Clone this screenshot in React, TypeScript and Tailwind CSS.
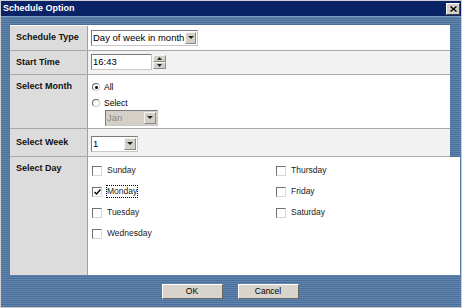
import React from "react";

function ArrowButton() {
  return (
    <span className="m-[1px] flex w-[12px] items-center justify-center border border-t-[#f4f4f4] border-l-[#f4f4f4] border-b-[#8a8a8a] border-r-[#8a8a8a] bg-[#d4d0c8]">
      <svg width="6" height="3" viewBox="0 0 6 3">
        <path d="M0 0h6L3 3z" fill="#222" />
      </svg>
    </span>
  );
}

function Dropdown({ text, width, disabled }: { text: string; width: string; disabled?: boolean }) {
  return (
    <div
      className={`flex h-[16px] ${width} items-stretch border border-t-[#7a7a7a] border-l-[#7a7a7a] border-b-[#c8c8c8] border-r-[#c8c8c8] ${
        disabled ? "bg-[#d4d0c8] text-[#8a8a8a]" : "bg-white text-black"
      }`}
    >
      <span className="flex-1 pl-[1px] text-[9.5px] leading-[14px] whitespace-nowrap">{text}</span>
      <ArrowButton />
    </div>
  );
}

function Radio({ checked, label }: { checked?: boolean; label: string }) {
  return (
    <div className="flex items-center gap-[4px]">
      <span className="flex h-[8px] w-[8px] items-center justify-center rounded-full border border-t-[#666] border-l-[#666] border-b-[#ccc] border-r-[#ccc] bg-white">
        {checked && <span className="h-[3px] w-[3px] rounded-full bg-black" />}
      </span>
      <span className="text-[8.5px]">{label}</span>
    </div>
  );
}

function Check({ label, checked, focused }: { label: string; checked?: boolean; focused?: boolean }) {
  return (
    <div className="flex h-[21px] items-center gap-[4px]">
      <span className="flex h-[10px] w-[10px] items-center justify-center border border-t-[#707070] border-l-[#707070] border-b-[#d8d8d8] border-r-[#d8d8d8] bg-white">
        {checked && (
          <svg width="7" height="6" viewBox="0 0 7 6">
            <path d="M0.5 3l2 2 4-4.5" stroke="#000" strokeWidth="1.3" fill="none" />
          </svg>
        )}
      </span>
      <span className={`text-[8.5px] leading-[11px] text-[#222] ${focused ? "border border-dotted border-black" : "border border-transparent"}`}>
        {label}
      </span>
    </div>
  );
}

function Row({
  label,
  h,
  bg,
  top,
  last,
  children,
}: {
  label: string;
  h: string;
  bg: string;
  top?: boolean;
  last?: boolean;
  children: React.ReactNode;
}) {
  return (
    <div className={`flex ${h} ${last ? "" : "border-b border-[#a8a8a8]"}`}>
      <div
        className={`flex w-[78px] shrink-0 border-r border-[#a0a0a0] bg-[#dcdcdc] pl-[6px] text-[9px] font-bold text-[#111] ${
          top ? "items-start pt-[5px]" : "items-center"
        }`}
      >
        {label}
      </div>
      <div className={`flex-1 ${bg}`}>{children}</div>
    </div>
  );
}

export default function App() {
  const btn =
    "flex h-[15px] w-[61px] items-center justify-center border border-t-white border-l-white border-b-[#666] border-r-[#666] bg-[#d8d4cc] text-[8.5px]";
  return (
    <div className="flex h-[308px] w-[462px] flex-col border border-[#cfcfcf] bg-[repeating-linear-gradient(180deg,#6086b0_0px,#6086b0_1px,#4c6f9a_1px,#4c6f9a_2px)] font-['Liberation_Sans',Arial,sans-serif] text-black">
      <div className="flex h-[16px] shrink-0 items-center justify-between border-b border-[#7f9dc2] bg-[#0a2266] pl-[2px] pr-[1px]">
        <span className="text-[9px] font-bold text-white">Schedule Option</span>
        <span className="flex h-[12px] w-[14px] items-center justify-center border border-t-white border-l-white border-b-[#404040] border-r-[#404040] bg-[#d4d0c8]">
          <svg width="7" height="6" viewBox="0 0 7 6">
            <path d="M0.5 0.5l6 5M6.5 0.5l-6 5" stroke="#000" strokeWidth="1.4" />
          </svg>
        </span>
      </div>

      <div className="flex flex-1 flex-col pl-[9px] pr-[11px] pt-[8px]">
        <div className="flex h-[250px] flex-col border-t border-white bg-white">
          <Row label="Schedule Type" h="h-[25px]" bg="bg-white">
            <div className="flex h-full items-center pl-[3px]">
              <Dropdown text="Day of week in month" width="w-[107px]" />
            </div>
          </Row>
          <Row label="Start Time" h="h-[24px]" bg="bg-[#f2f2f2]">
            <div className="flex h-full items-center pl-[3px]">
              <div className="flex h-[16px] w-[61px] items-center border border-t-[#7a7a7a] border-l-[#7a7a7a] border-b-[#c8c8c8] border-r-[#c8c8c8] bg-white pl-[1px] text-[9.5px]">
                16:43
              </div>
              <div className="ml-[1px] flex h-[14px] w-[13px] flex-col">
                <span className="flex flex-1 items-center justify-center border border-t-[#f4f4f4] border-l-[#f4f4f4] border-b-[#8a8a8a] border-r-[#8a8a8a] bg-[#d4d0c8]">
                  <svg width="5" height="3" viewBox="0 0 5 3">
                    <path d="M0 3h5L2.5 0z" fill="#222" />
                  </svg>
                </span>
                <span className="flex flex-1 items-center justify-center border border-t-[#f4f4f4] border-l-[#f4f4f4] border-b-[#8a8a8a] border-r-[#8a8a8a] bg-[#d4d0c8]">
                  <svg width="5" height="3" viewBox="0 0 5 3">
                    <path d="M0 0h5L2.5 3z" fill="#222" />
                  </svg>
                </span>
              </div>
            </div>
          </Row>
          <Row label="Select Month" h="h-[54px]" bg="bg-white" top>
            <div className="flex flex-col pl-[4px] pt-[5px]">
              <div className="h-[17px] pt-[1px]">
                <Radio checked label="All" />
              </div>
              <div className="h-[13px]">
                <Radio label="Select" />
              </div>
              <div className="pl-[13px]">
                <Dropdown text="Jan" width="w-[53px]" disabled />
              </div>
            </div>
          </Row>
          <Row label="Select Week" h="h-[29px]" bg="bg-[#f2f2f2]">
            <div className="flex h-full items-center pl-[3px] pt-[2px]">
              <Dropdown text="1" width="w-[47px]" />
            </div>
          </Row>
          <Row label="Select Day" h="h-[118px]" bg="bg-white" top last>
            <div className="grid grid-cols-[184px_184px] pl-[4px] pt-[3px]">
              <div className="flex flex-col">
                <Check label="Sunday" />
                <Check label="Monday" checked focused />
                <Check label="Tuesday" />
                <Check label="Wednesday" />
              </div>
              <div className="flex flex-col">
                <Check label="Thursday" />
                <Check label="Friday" />
                <Check label="Saturday" />
              </div>
            </div>
          </Row>
        </div>

        <div className="flex flex-1 items-center justify-center gap-[15px]">
          <button className={btn}>OK</button>
          <button className={btn}>Cancel</button>
        </div>
      </div>
    </div>
  );
}
